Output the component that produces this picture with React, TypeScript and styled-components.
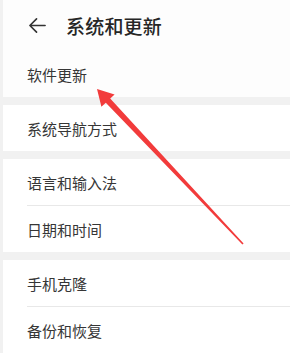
import React from 'react';
import styled, { createGlobalStyle } from 'styled-components';

const GlobalStyle = createGlobalStyle`
  html, body {
    margin: 0;
    padding: 0;
    background: #f1f1f1;
  }
  body {
    font-family: "Noto Sans CJK SC", "Noto Sans", sans-serif;
  }
`;

const sections: string[][] = [
  ['软件更新'],
  ['系统导航方式'],
  ['语言和输入法', '日期和时间'],
  ['手机克隆', '备份和恢复'],
];

const App: React.FC = () => {
  return (
    <Page>
      <GlobalStyle />
      <Header>
        <BackIcon viewBox="0 0 20 20">
          <path d="M18 10 H2 M9 3 L2 10 L9 17" />
        </BackIcon>
        <Title>系统和更新</Title>
      </Header>
      {sections.map((items, i) => (
        <Section key={i} $first={i === 0}>
          {items.map((label, j) => (
            <Row key={label} $divider={j > 0}>
              {label}
            </Row>
          ))}
        </Section>
      ))}
      <Pointer viewBox="0 0 290 353">
        <polygon points="97,89 114.6,94.4 110.2,98.5 243.6,243.5 242.4,244.5 105.8,102.7 101.4,106.8" />
      </Pointer>
    </Page>
  );
};
export default App;

const Page = styled.div`
  position: relative;
  width: 290px;
  height: 353px;
  overflow: hidden;
  padding-left: 3px;
  box-sizing: border-box;
  background: #f1f1f1;
`;

const Header = styled.div`
  height: 51px;
  display: flex;
  align-items: center;
  background: #fdfdfd;
`;

const BackIcon = styled.svg`
  width: 19px;
  height: 19px;
  margin-left: 25px;
  fill: none;
  stroke: #333;
  stroke-width: 1.7;
  stroke-linecap: round;
  stroke-linejoin: round;
`;

const Title = styled.div`
  margin-left: 19px;
  font-size: 19px;
  font-weight: 500;
  color: #262626;
  letter-spacing: 0.2px;
`;

const Section = styled.div<{ $first: boolean }>`
  background: #ffffff;
  margin-bottom: 8px;
  ${(p) => (p.$first ? 'background: #fdfdfd;' : '')}
`;

const Row = styled.div<{ $divider: boolean }>`
  height: 46px;
  display: flex;
  align-items: center;
  padding-left: 24px;
  font-size: 15px;
  color: #363636;
  ${(p) =>
    p.$divider
      ? `
    border-top: 1px solid #e8e8e8;
    margin-left: 24px;
    padding-left: 0;
  `
      : ''}
`;

const Pointer = styled.svg`
  position: absolute;
  left: 0;
  top: 0;
  width: 290px;
  height: 353px;
  fill: #f23b3b;
  pointer-events: none;
`;
